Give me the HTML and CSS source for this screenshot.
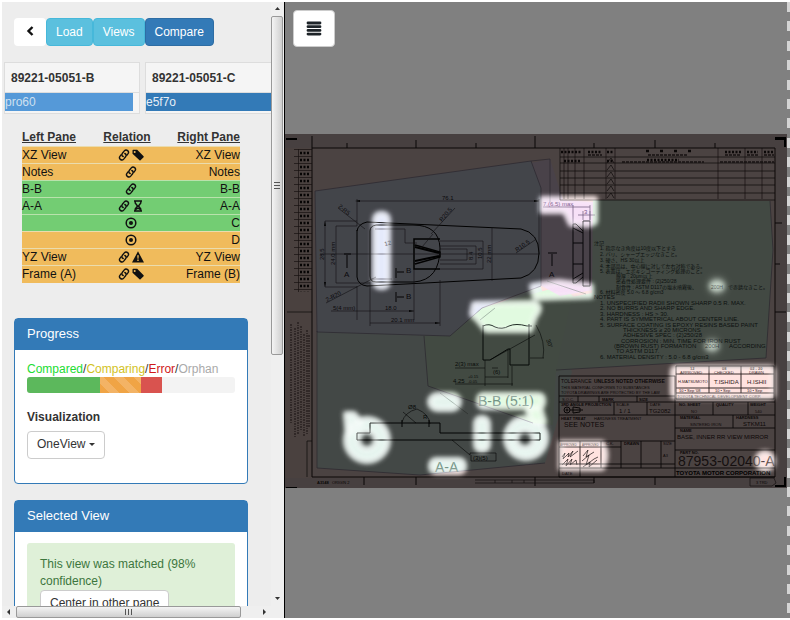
FILE: index.html
```html
<!DOCTYPE html>
<html lang="en">
<head>
<meta charset="utf-8">
<title>Drawing Compare</title>
<link rel="stylesheet" href="styles.css">
</head>
<body>
<svg class="defs" aria-hidden="true">
  <symbol id="link" viewBox="0 0 12 12"><g fill="none" stroke="#111" stroke-width="1.400" stroke-linecap="round"><path d="M5.200 7.500C3.600 6.800 3.600 5.300 4.400 4.300L6.300 1.900C7.200.900 8.500.700 9.600 1.600S10.700 3.900 9.900 4.900L8.800 6.200"/><path d="M6.800 4.500C8.400 5.200 8.400 6.700 7.600 7.700L5.700 10.100C4.800 11.100 3.500 11.300 2.400 10.400S1.300 8.100 2.100 7.100L3.200 5.800"/></g></symbol>
  <symbol id="tag" viewBox="0 0 12 12"><path fill="#111" fill-rule="evenodd" d="M.5 1.500Q.5.800 1.200.800H5.200L11.600 7.200Q12 7.700 11.600 8.200L8.500 11.300Q8 11.700 7.500 11.300L.5 4.800ZM2.700 2A1 1 0 1 0 2.700 4A1 1 0 1 0 2.700 2Z"/></symbol>
  <symbol id="hourglass" viewBox="0 0 12 12"><path fill="none" stroke="#111" stroke-width="1.400" d="M2 1H10M2 11H10M3.200 1V3L5.500 6L3.200 9V11M8.800 1V3L6.500 6L8.800 9V11M4 9.500L6 8L8 9.500"/></symbol>
  <symbol id="record" viewBox="0 0 12 12"><circle cx="6" cy="6" r="4.800" fill="none" stroke="#111" stroke-width="1.500"/><circle cx="6" cy="6" r="2" fill="#111"/></symbol>
  <symbol id="warning" viewBox="0 0 12 12"><path fill="#111" fill-rule="evenodd" d="M6 .3L12 11.500H0ZM5.200 4.200L5.500 7.800H6.500L6.800 4.200ZM5.300 8.600V10H6.700V8.600Z"/></symbol>
</svg>
<div class="app">
  <aside class="sidebar">
    <div class="content">
      <div class="toolbar">
        <button class="btn back" aria-label="Back"><svg width="8" height="10" viewBox="0 0 8 10"><path d="M6.500 1L2.500 5L6.500 9" fill="none" stroke="#111" stroke-width="2.400"/></svg></button><button class="btn info">Load</button><button class="btn info">Views</button><button class="btn primary">Compare</button>
      </div>
      <div class="parts">
        <section class="part"><h2>89221-05051-B</h2><div class="owner">pro60</div></section>
        <section class="part wide"><h2>89221-05051-C</h2><div class="owner strong">e5f7o</div></section>
      </div>
      <table class="relations">
        <thead><tr><th>Left Pane</th><th>Relation</th><th>Right Pane</th></tr></thead>
        <tbody>
          <tr><td>XZ View</td><td><svg><use href="#link"/></svg><svg><use href="#tag"/></svg></td><td>XZ View</td></tr>
          <tr><td>Notes</td><td><svg><use href="#link"/></svg></td><td>Notes</td></tr>
          <tr class="ok"><td>B-B</td><td><svg><use href="#link"/></svg></td><td>B-B</td></tr>
          <tr class="ok"><td>A-A</td><td><svg><use href="#link"/></svg><svg><use href="#hourglass"/></svg></td><td>A-A</td></tr>
          <tr class="ok"><td></td><td><svg><use href="#record"/></svg></td><td>C</td></tr>
          <tr><td></td><td><svg><use href="#record"/></svg></td><td>D</td></tr>
          <tr><td>YZ View</td><td><svg><use href="#link"/></svg><svg><use href="#warning"/></svg></td><td>YZ View</td></tr>
          <tr><td>Frame (A)</td><td><svg><use href="#link"/></svg><svg><use href="#tag"/></svg></td><td>Frame (B)</td></tr>
        </tbody>
      </table>
      <section class="panel">
        <h3>Progress</h3>
        <div class="body">
          <div class="legend"><span class="compared">Compared</span>/<span class="comparing">Comparing</span>/<span class="error">Error</span>/<span class="orphan">Orphan</span></div>
          <div class="progress"><div class="bar done" style="width:35%"></div><div class="bar busy" style="width:20%"></div><div class="bar failed" style="width:10%"></div></div>
          <h4 id="visualization">Visualization</h4>
          <button class="btn outline" aria-describedby="visualization">OneView <span class="caret"></span></button>
        </div>
      </section>
      <section class="panel">
        <h3>Selected View</h3>
        <div class="body">
          <div class="alert">This view was matched (98% confidence)<br><button class="btn outline">Center in other pane</button></div>
        </div>
      </section>
    </div>
    <div class="vbar">
      <svg width="13" height="14"><path d="M4 8L6.500 5L9 8Z" fill="#333"/></svg>
      <div class="thumb"><svg width="6" height="7"><path d="M0 .5H6M0 3.500H6M0 6.500H6" stroke="#555"/></svg></div>
      <svg width="13" height="14"><path d="M4 5L6.500 8L9 5Z" fill="#333"/></svg>
    </div>
    <div class="hbar">
      <svg width="14" height="12"><path d="M8 3L5 6L8 9Z" fill="#333"/></svg>
      <div class="thumb"><svg width="7" height="6"><path d="M.5 0V6M3.500 0V6M6.500 0V6" stroke="#555"/></svg></div>
      <svg width="14" height="12"><path d="M6 3L9 6L6 9Z" fill="#333"/></svg>
    </div>
  </aside>
  <main class="viewer">
    <div class="viewer-tools"><button class="btn menu" aria-label="Menu"><svg width="16" height="15"><path d="M2 2H14M2 5.700H14M2 9.400H14M2 13.100H14" stroke="#1d2328" stroke-width="2.800" stroke-linecap="round"/></svg></button></div>
    <svg class="sheet" viewBox="285 134 502 354" role="img" aria-label="Part drawing">
      <defs>
        <filter id="soft" x="-30%" y="-30%" width="160%" height="160%"><feGaussianBlur stdDeviation="2.500"/></filter>
        <filter id="wide" x="-50%" y="-50%" width="200%" height="200%"><feGaussianBlur stdDeviation="4"/></filter>
        <pattern id="rows" width="18" height="7" patternUnits="userSpaceOnUse" x="294" y="149"><path d="M0 .5H18M4.500 0V7" stroke="#4b3838" stroke-width=".7"/><path d="M6 4H16" stroke="#161010" stroke-width="2.500" stroke-dasharray="2 1.500"/></pattern>
        <pattern id="hatch" width="9" height="7" patternUnits="userSpaceOnUse" x="606" y="157"><path d="M1 6L5 1L8 6" fill="none" stroke="#2a2020" stroke-width=".7"/></pattern>
        <g id="lights">
          <rect x="375" y="214" width="13" height="73" rx="5"/>
          <path d="M542 199H595V222Q590 226 582 224L571 224L565 211H542Z"/>
          <path d="M532 286L558 282L591 286V296L535 298Z"/>
          <path d="M474 304L535 303Q543 307 535 316L530 330H486L478 320L472 314Z"/>
          <rect x="430" y="395" width="29" height="14" rx="7"/>
          <rect x="479" y="395" width="64" height="12" rx="4"/>
          <rect x="431" y="460" width="33" height="12" rx="5"/>
          <path d="M346 414H354L362 424L348 436Z"/>
          <path fill-rule="evenodd" d="M367 419A21 21 0 1 1 367 461A21 21 0 1 1 367 419ZM367 431A9 9 0 1 0 367 449A9 9 0 1 0 367 431Z"/>
          <rect x="476" y="418" width="12" height="32" rx="5"/>
          <path d="M528 411L540 408L544 422L534 424Z"/>
          <path fill-rule="evenodd" d="M526 418A20 20 0 1 1 526 458A20 20 0 1 1 526 418ZM525 430A9 9 0 1 0 525 448A9 9 0 1 0 525 430Z"/>
          <rect x="673" y="368" width="100" height="29" rx="3"/>
          <path d="M561 443H602Q609 455 602 468H561Z"/>
          <circle cx="765" cy="461" r="8"/>
        </g>
        <mask id="shade" maskUnits="userSpaceOnUse" x="285" y="134" width="502" height="354">
          <rect x="285" y="134" width="502" height="354" fill="#fff"/>
          <use href="#lights" fill="#000" stroke="#000" stroke-width="4" filter="url(#soft)"/>
          <g fill="#000" filter="url(#soft)"><ellipse cx="717" cy="286" rx="8" ry="6" opacity=".7"/><ellipse cx="712" cy="346" rx="7" ry="5" opacity=".65"/></g>
        </mask>
      </defs>
      <rect x="285" y="134" width="502" height="354" fill="#fbded7"/>
      <path d="M312 148H775V477H312Z" fill="#ffe2df"/>
      <path d="M285 134H787V148H285ZM285 478H787V488H285ZM776 148H787V478H776Z" fill="#f0d8d8"/>
      <path d="M317 331L428 335L540 285L572 372L545 463L420 475L317 468Z" fill="#e5f4ee"/>
      <path d="M424 336L480 308L562 286L575 298L572 367L556 372L553 425L533 423L428 386Z" fill="#e1fae0"/>
      <path d="M531 163L550 159L563 200L593 202V290L560 296L540 285Z" fill="#f7e0f7"/>
      <path d="M315 191L531 161L541 188V286L482 308L450 336L317 332Z" fill="#e4e9fb"/>
      <path d="M593 200L770 201L773 250L766 358L556 370L572 297L592 293Z" fill="#dff8e2"/>
      <g fill="none" stroke="#8b819a" stroke-width=".7"><path d="M315 191L531 161L541 188V286L482 308L450 336L317 332ZM550 159L531 161M550 159V202M317 331V468L420 475L545 463M424 336L428 386L533 423M770 201L773 250L766 358L556 370"/></g>

      <g fill="none" stroke="#241919" stroke-width="1">
        <path d="M312 148H775V477H312ZM312 148V136M347 143V148M416 140V148M476 143V148M535 136V148M594 143V148M655 140V148M715 143V148M364 477V485M416 477V485M535 477V486M594 477V483M655 477V485M775 223H782M775 264H780M775 312H786"/>
        <path d="M287 312H312M307 441V477M307 441H312M560 148V200H775M560 157H775M560 163H775M560 171H775M560 178H775M560 185H775M560 193H775" stroke-width=".7"/>
        <path d="M564 148V199M568 148V199M575 148V199M584 148V199M606 148V199M615 148V199M718 148V199M745 148V199M762 148V199" stroke-width=".6"/>
      </g>
      <path d="M286 138H297V140H286ZM775 137H786V147H784V140H775ZM775 485H784V477H786V487H775ZM286 487H297V488H286Z" fill="#000"/>
      <rect x="294" y="149" width="18" height="143" fill="url(#rows)"/><rect x="606" y="157" width="9" height="42" fill="url(#hatch)"/>
      <g stroke="#281d1d" stroke-width="2.500" stroke-dasharray="2 1.500" fill="none"><path d="M561 152H582M588 152H602M607 152H614M725 152H742M747 152H758M764 152H774M607 161H614M564 161H581M647 160H679"/><path d="M646 151H692" stroke-dasharray="3 11"/></g>
      <g stroke="#4c3b3b" stroke-width="1.500" stroke-dasharray="3 1" fill="none"><path d="M648 155H687M725 155H740M747 155H758M764 155H774M622 162H704M720 162H774M588 155H602"/></g>
      <g stroke="#4a3434" stroke-width="1" stroke-dasharray="2 1 1 1" fill="none"><path d="M291 324V424M295 328V438M298 322V434M301 326V431M304 334V437M307 330V434M309 335V427"/></g>
      <g font-family="Liberation Sans, sans-serif" font-size="4" fill="#241717"><text x="317" y="484" font-weight="bold">A3148</text><text x="332" y="484">ORIGIN 2</text><path d="M475 480H594V483H475M495 480V483M512 480V483M524 480V483M750 478H774L776 483L772 486H750Z" fill="none" stroke="#241717" stroke-width=".6"/><text x="756" y="484">3 TRD</text></g>

      <g fill="none" stroke="#050505" stroke-width="1">
        <path d="M357 230V277Q358 285 367 286L521 278Q539 273 539 253T521 229L367 222Q358 224 357 231"/>
        <path d="M370 231Q370 226 376 225H413Q439 225 440 248Q440 280 414 282H376Q370 282 370 276Z"/>
        <path d="M440 239H414V269H440M414 242V266M415 245L440 252V257L415 264" stroke-width="1.500"/>
        <path d="M415 247L439 253M415 261L439 256" stroke-width="2"/>
      </g>
      <g fill="none" stroke="#38343d" stroke-width=".6">
        <path d="M320 254H540M357 201H539M357 199V226M539 199V254M325 221H357M325 221V287H357M336 226H357M336 226V283H370M357 286V320M370 282V326M414 269V320M440 280V326M331 311H414M370 323H440M492 227V281M440 241H483V269H440M440 246H476V264H440M440 249H467V260H440M338 208L365 229M326 303L376 277M431 234L455 208M433 234L422 247M516 253L535 240M375 229H405V243H417M370 279H392"/>
      </g>
      <path d="M344 254H351M347 255V268M396 268V278M397 272H404M396 292V302M397 297H404" fill="none" stroke="#08080a"/>
      <path d="M355 201l5-1v2zM539 201l-5-1v2zM325 221l-1 5h2zM325 287l-1-5h2zM414 311l-5-1v2zM440 323l-5-1v2z" fill="#111"/>
      <g font-family="Liberation Sans, sans-serif" font-size="6" fill="#292631"><text x="442" y="200">76.1</text><text x="333" y="310">5(4 mm)</text><text x="385" y="310">18.0</text><text x="391" y="322">20.1 mm</text><text transform="translate(324 260) rotate(-90)">28.5</text><text transform="translate(335 265) rotate(-90)">24.0 mm</text><text transform="translate(491 263) rotate(-90)">22 mm</text><text transform="translate(482 259) rotate(-90)">10.5</text><text transform="translate(473 260) rotate(-90)">8.4</text><text transform="translate(442 222) rotate(-50)">R20.5</text><text transform="translate(517 252) rotate(-35)">R10.5</text><text transform="translate(338 207) rotate(40)">2-R5</text><text transform="translate(327 302) rotate(-27)">2-R20</text><text x="385" y="246" transform="rotate(-15 385 246)">12</text><text x="406" y="273" font-size="8">B</text><text x="406" y="299" font-size="8">B</text><text x="344" y="277" font-size="8">A</text><text x="549" y="277" font-size="8">A</text></g>

      <g fill="none" stroke="#151218" stroke-width="1"><path d="M583 221H590V286H583ZM573 224V283H576L583 277M573 224H576L583 231M573 228L583 233M573 279L583 273M573 243H583M573 264H583M548 253H557M552 254V266"/><path d="M543 207H590M573 205V224M590 205V221M578 215H595M583 211V220M590 211V220" stroke="#695576" stroke-width=".7"/></g>
      <g font-family="Liberation Sans, sans-serif" font-size="6" fill="#785688"><text x="543" y="206">7.(6.5) max</text><text x="584" y="214">3</text></g>

      <g fill="none" stroke="#111c16" stroke-width="1"><path d="M483 325V360H490L508 349H510V365H529V324M483 326Q489 323 495 327Q502 330 509 326Q516 323 527 326L532 326"/><path d="M490 360L535 335M530 358H544M536 325Q546 342 543 358M455 368H485M492 368H498M485 377H508M455 384H513M485 360V386M508 350V378M512 366V386" stroke-width=".6"/><path d="M547 281L586 294" stroke="#6d7d74" stroke-width=".5"/></g>
      <g font-family="Liberation Sans, sans-serif" font-size="6" fill="#202c24"><text x="455" y="366">2(3) max</text><text x="493" y="374">(6)</text><text x="453" y="383">4.25</text><text x="468" y="378" font-size="4">+0.15</text><text x="468" y="383" font-size="4">-0.05</text><text transform="translate(546 340) rotate(70)">30°</text></g>
      <path d="M480 320L495 308M440 393L468 414" stroke="#7c8b83" fill="none" stroke-width=".6"/>

      <g fill="none" stroke="#050807" stroke-width="1"><path d="M357 433H370V423H440V433H540V440H357ZM402 420V427M429 420V427"/><path d="M402 422Q405 412 417 409Q429 414 430 424M403 412L416 423M452 440L470 455V453H496V461H471V455" stroke-width=".6"/></g>
      <g font-family="Liberation Sans, sans-serif" font-size="6" fill="#161c19"><text x="408" y="409">Ø8</text><text x="423" y="419">R</text><text x="473" y="460">(3)(5)</text></g>
      <g font-family="Liberation Sans, sans-serif" font-size="14" fill="#68897a"><text x="478" y="406">B-B (5:1)</text><text x="435" y="472">A-A</text></g>

      <g font-family="Liberation Sans, Noto Sans CJK JP, sans-serif" font-size="5" fill="#30403a">
        <text x="594" y="245">注記</text><text x="600" y="250">1.  指示なき角度は10度以下とする</text><text x="600" y="256">2.  バリ、シャープエッジなきこと。</text><text x="600" y="262">3.  硬さ、HS 30以上</text><text x="600" y="268">4.  本部品は、中心線に対して左右対称である。</text><text x="600" y="273">5.  表面は、エポキシコーティング処理のこと。</text><text x="616" y="278">膜厚 : 20μm以上</text><text x="616" y="283">密着性処理要件 : (2)250/28</text><text x="616" y="289">耐食性 : ASTM D117の塩水噴霧後、</text><text x="711" y="289">200H</text><text x="728" y="289">で赤錆なきこと。</text><text x="600" y="294">6.  材料密度   5.0 ～ 6.8 g/cm3</text>
        <g font-size="6"><text x="594" y="299">NOTES</text><text x="600" y="305">1. UNSPECIFIED RADII SHOWN SHARP 0.5 R. MAX.</text><text x="600" y="310">2. NO BURRS AND SHARP EDGE.</text><text x="600" y="316">3. HARDNESS : HS &gt; 30.</text><text x="600" y="321">4. PART IS SYMMETRICAL ABOUT CENTER LINE.</text><text x="600" y="327">5. SURFACE COATING IS EPOXY RESINS BASED PAINT</text><text x="623" y="332">THICKNESS ≥ 20 MICRONS</text><text x="623" y="337">ADHESIVE SPEC : (2)250/28</text><text x="621" y="343">CORROSION : MIN. TIME FOR IRON RUST</text><text x="614" y="348">(BROWN RUST) FORMATION</text><text x="705" y="348">200H</text><text x="729" y="348">ACCORDING</text><text x="616" y="353">TO ASTM D117.</text><text x="600" y="359">6. MATERIAL DENSITY : 5.0 - 6.8 g/cm3</text></g>
      </g>

      <g fill="none" stroke="#1e1414" stroke-width=".9"><path d="M559 376H675V477M559 376V477H775M559 396H675M559 402H675M559 415H775M559 441H675M559 468H775M614 402V415M647 402V415M578 396V402M599 396V402M637 396V402M675 402H775M713 402V415M748 402V415M675 428H775M733 415V428M675 450H775M580 441V477M601 441V468M621 441V468M641 441V468M661 441V468M559 464H675"/><path d="M676 366H774V399H676ZM676 374H774M676 388H774M676 393H774M709 366V393M741 366V393M559 447H621"/></g>
      <g font-family="Liberation Sans, sans-serif" font-size="4" fill="#302121">
        <text x="561" y="383" font-size="5">TOLERANCE</text><text x="594" y="383" font-size="5" font-weight="bold">UNLESS NOTED OTHERWISE</text><text x="561" y="389">THIS MATERIAL CONFORMS TO SUBSTANCES</text><text x="561" y="394">TOYOTA DRAWINGS ARE PROTECTED BY THE LAW</text><text x="562" y="401">S.O.C.</text><text x="602" y="401" font-weight="bold">MARK</text><text x="639" y="401" font-weight="bold">SIZE</text><text x="561" y="406" font-weight="bold">3RD ANGLE PROJECTION</text><text x="616" y="406">SCALE</text><text x="650" y="406">DATE</text><text x="649" y="413" font-size="6">TG2082</text><text x="619" y="413" font-size="6">1 / 1</text><text x="561" y="420" font-weight="bold">HEAT TREAT</text><text x="594" y="420">HARDNESS TREATMENT</text><text x="564" y="427" font-size="7">SEE NOTES</text>
        <text x="679" y="406" font-weight="bold">NO. SHEET</text><text x="716" y="406" font-weight="bold">QUALITY</text><text x="750" y="406" font-weight="bold">WEIGHT</text><text x="691" y="413">NO</text><text x="755" y="413">540</text><text x="680" y="419" font-weight="bold">MATERIAL</text><text x="690" y="426">SINTERED IRON</text><text x="736" y="419" font-weight="bold">HARDNESS</text><text x="743" y="426" font-size="6">STKM11</text><text x="680" y="432" font-weight="bold">NAME</text><text x="677" y="439" font-size="6">BASE, INNER RR VIEW MIRROR</text><text x="680" y="454" font-weight="bold">PART NO.</text><text x="678" y="466" font-size="14" fill="#4c3939">87953-02040-A</text><text x="676" y="475" font-size="6" font-weight="bold" fill="#000">TOYOTA MOTOR CORPORATION</text>
        <text x="690" y="370" font-weight="bold">12</text><text x="722" y="370" font-weight="bold">08</text><text x="750" y="370" font-weight="bold">02 - 20</text><text x="680" y="374">APPROVED</text><text x="714" y="374">CHECKED</text><text x="749" y="374">DRAWN</text><text x="678" y="383">H.MATSUMOTO</text><text x="714" y="384" font-size="6">T.ISHIDA</text><text x="747" y="384" font-size="6">H.ISHII</text><text x="679" y="392">10 • Sep '08</text><text x="715" y="392">10 • Sep</text><text x="747" y="392">10 • Sep</text><text x="677" y="398">TOYOTA TECHNICAL DEVELOPMENT CORP.</text>
        <text x="560" y="446" font-size="3">APPROVED</text><text x="582" y="446" font-size="3">APPROVED</text><text x="606" y="445">C.K.</text><text x="624" y="445" font-weight="bold">DRAWN</text><text x="663" y="445">SIZE</text><text x="663" y="457">A3</text><text x="562" y="475">DATE</text>
      </g>
      <g stroke="#191313" fill="none"><circle cx="567" cy="410" r="3"/><circle cx="567" cy="410" r="1"/><path d="M573 407L580 408V412L573 413ZM570 410H583"/><path d="M562 457L565 453L563 459L569 453L568 457L573 451L570 457L578 451M562 465L568 459L566 466L572 459L570 465L576 460L577 465M583 456L588 450L586 457L594 452M582 461L589 455L586 465L594 459L598 457M583 467L590 462L589 467L597 460" stroke-width=".7"/></g>
      <rect x="285" y="134" width="502" height="354" fill="#000" opacity=".7" mask="url(#shade)"/>
      <use href="#lights" fill="none" stroke="#fff" stroke-width="4" filter="url(#soft)" opacity=".65"/>
      <g fill="#fff" filter="url(#wide)" opacity=".35"><circle cx="717" cy="286" r="8"/><circle cx="712" cy="346" r="7"/></g>
    </svg>
    <div class="dashes"></div>
  </main>
</div>
</body>
</html>
```
FILE: styles.css
```css
* { box-sizing: border-box; }
body { margin: 0; background: #fff; color: #333; font: 12px/17px "Liberation Sans", Arial, sans-serif; }
button { font: inherit; }
h2, h3, h4 { margin: 0; }
.defs { position: absolute; width: 0; height: 0; }
.app { display: grid; grid-template-columns: 283px 1fr; height: 100vh; padding: 2px 0 2px 2px; }
.sidebar { display: grid; grid-template-columns: 1fr 13px; grid-template-rows: 1fr 12px; min-height: 0; background: #ededed; border-right: 1px solid #000; }
.content { min-width: 0; min-height: 0; overflow: hidden; }
.toolbar { display: flex; padding: 16px 12px 0; }
.btn { height: 28px; padding: 0 9px; border: 1px solid transparent; border-radius: 4px; white-space: nowrap; color: #fff; }
.back { width: 32px; background: #fff; }
.info { background: #5bc0de; border-color: #46b8da; }
.primary { background: #337ab7; border-color: #2e6da4; }
.outline { background: #fff; color: #333; border-color: #ccc; }
.parts { display: flex; gap: 5px; padding: 16px 0 0 2px; }
.part { flex: 0 0 136px; height: 52px; background: #f5f5f5; border: 1px solid #ddd; }
.part.wide { flex-basis: 200px; }
.part h2 { height: 30px; padding-left: 6px; border-bottom: 1px solid #ddd; font-size: 12px; line-height: 30px; }
.owner { width: 128px; height: 18px; background: #5599d8; color: #cfe0f0; line-height: 18px; }
.owner.strong { width: auto; background: #337ab7; color: #e6eef6; }
.relations { width: 218px; margin: 15px 0 0 20px; border-collapse: collapse; table-layout: fixed; color: #111; }
.relations th { padding: 0; text-decoration: underline; color: #333; }
.relations th:nth-child(2) { padding-right: 8px; }
.relations td { height: 17px; padding: 0; line-height: 16px; border-top: 1px solid #eadcae; background: #f0bb5c; }
.relations .ok td { background: #73cd73; border-color: #b9e2ac; }
.relations td:first-child, .relations th:first-child { text-align: left; }
.relations td:nth-child(2) { text-align: center; }
.relations td:last-child, .relations th:last-child { text-align: right; }
.relations svg { width: 12px; height: 12px; margin: 0 1px; vertical-align: -2px; }
.panel { margin: 0 23px 16px 12px; border: 1px solid #337ab7; border-radius: 4px; background: #fff; }
.relations + .panel { margin-top: 35px; }
.panel h3 { height: 31px; padding-left: 12px; background: #337ab7; color: #fff; font-size: 13px; font-weight: normal; line-height: 30px; }
.panel .body { padding: 11px 12px; }
.relations + .panel .body { height: 133px; }
.legend { color: #333; line-height: 16px; }
.compared { color: #22dc32; }
.comparing { color: #d2c21e; }
.error { color: #d01818; }
.orphan { color: #aaa; }
.progress { display: flex; height: 16px; overflow: hidden; border-radius: 3px; background: #f3f3f3; }
.done { background: #5cb85c; }
.busy { background: repeating-linear-gradient(45deg, #f0a445 0, #f0a445 7px, #f3b365 7px, #f3b365 14px); }
.failed { background: #d9534f; }
.panel h4 { margin: 16px 0 9px; font-size: 12px; }
.panel .body > .outline { margin-top: -4px; }
.caret { display: inline-block; border: 3px solid transparent; border-top-color: #333; border-bottom: 0; vertical-align: 2px; }
.alert { padding: 13px; background: #dff0d8; color: #3c763d; border-radius: 3px; }
.vbar { display: flex; flex-direction: column; background: #efefef; grid-row: span 2; }
.hbar { display: flex; background: #efefef; }
.thumb { display: flex; align-items: center; justify-content: center; border: 1px solid #999; border-radius: 2px; }
.vbar .thumb { height: 55%; margin-right: 1px; background: linear-gradient(90deg, #f4f4f4, #cfcfcf); }
.vbar > svg:last-child { margin: auto 0 12px; }
.hbar .thumb { width: 225px; background: linear-gradient(#f4f4f4, #cfcfcf); }
.hbar > svg:last-child { margin-left: auto; }
.viewer { display: grid; grid-template-columns: 1fr 3px; grid-template-rows: 132px 1fr; min-width: 0; min-height: 0; background: #808080; }
.viewer-tools { padding: 8px; }
.menu { display: grid; place-items: center; width: 42px; height: 37px; background: #fff; border-color: #ccc; }
.sheet { display: block; width: 100%; height: auto; grid-column: 1; grid-row: 2; }
.dashes { grid-column: 2; grid-row: 1 / 3; background: repeating-linear-gradient(#d4d4d4 0 10px, #808080 10px 19px, #d4d4d4 19px 29px, #808080 29px 39px, #d4d4d4 39px 49px, #808080 49px 58px, #d4d4d4 58px 68px, #808080 68px 78px, #d4d4d4 78px 88px, #808080 88px 97px); }
```
